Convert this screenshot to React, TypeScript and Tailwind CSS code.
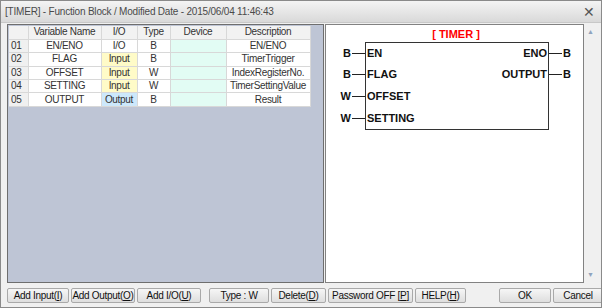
import React from "react";

const rows = [
  { no: "01", name: "EN/ENO", io: "I/O", type: "B", desc: "EN/ENO" },
  { no: "02", name: "FLAG", io: "Input", type: "B", desc: "TimerTrigger" },
  { no: "03", name: "OFFSET", io: "Input", type: "W", desc: "IndexRegisterNo." },
  { no: "04", name: "SETTING", io: "Input", type: "W", desc: "TimerSettingValue" },
  { no: "05", name: "OUTPUT", io: "Output", type: "B", desc: "Result" },
];

function ioBg(io: string) {
  if (io === "Input") return "bg-[#fffbc8]";
  if (io === "Output") return "bg-[#cde8fb]";
  return "bg-white";
}

function Btn({ children, className = "" }: { children: React.ReactNode; className?: string }) {
  return (
    <button
      className={
        "h-[15px] shrink-0 p-0 flex items-center justify-center whitespace-nowrap border border-[#a9a9a9] rounded-[2px] bg-gradient-to-b from-[#f6f6f6] to-[#dedede] text-[10px] tracking-[-0.3px] leading-none text-[#111] " +
        className
      }
    >
      {children}
    </button>
  );
}

function Diagram() {
  const left = [
    { t: "B", n: "EN", y: 27 },
    { t: "B", n: "FLAG", y: 48 },
    { t: "W", n: "OFFSET", y: 70 },
    { t: "W", n: "SETTING", y: 92 },
  ];
  const right = [
    { t: "B", n: "ENO", y: 27 },
    { t: "B", n: "OUTPUT", y: 48 },
  ];
  return (
    <svg width="258" height="120" className="block" style={{ fontFamily: '"Liberation Sans", Arial, sans-serif' }}>
      <text x="130" y="12" textAnchor="middle" fill="#ff0000" fontSize="11" fontWeight="bold">
        [ TIMER ]
      </text>
      <rect x="39.5" y="16.5" width="183" height="87" fill="none" stroke="#333" strokeWidth="1" />
      {left.map((p) => (
        <g key={p.n}>
          <text x="25" y={p.y + 4} textAnchor="end" fontSize="11" fontWeight="bold" fill="#111">
            {p.t}
          </text>
          <line x1="26" x2="39" y1={p.y + 0.5} y2={p.y + 0.5} stroke="#222" />
          <text x="41" y={p.y + 4} fontSize="11" fontWeight="bold" fill="#111">
            {p.n}
          </text>
        </g>
      ))}
      {right.map((p) => (
        <g key={p.n}>
          <text x="221" y={p.y + 4} textAnchor="end" fontSize="11" fontWeight="bold" fill="#111">
            {p.n}
          </text>
          <line x1="223" x2="236" y1={p.y + 0.5} y2={p.y + 0.5} stroke="#222" />
          <text x="237" y={p.y + 4} fontSize="11" fontWeight="bold" fill="#111">
            {p.t}
          </text>
        </g>
      ))}
    </svg>
  );
}

export default function App() {
  const cell = "border-r border-b border-[#d8d8d8] text-center";
  return (
    <div
      className="w-[602px] h-[308px] flex flex-col bg-[#f0f0f0] border border-[#8a8a8a] overflow-hidden text-[#222]"
      style={{ fontFamily: '"Liberation Sans", Arial, sans-serif' }}
    >
      {/* title bar */}
      <div className="h-[22px] shrink-0 flex items-center justify-between pl-[4px] pr-[6px] bg-gradient-to-b from-[#f4f4f4] to-[#d9d9d9] border-b border-[#c8c8c8]">
        <span className="text-[10px] tracking-[-0.2px] text-[#4a4a4a] whitespace-nowrap">
          [TIMER] - Function Block / Modified Date - 2015/06/04 11:46:43
        </span>
        <span className="text-[14px] text-[#555] leading-none">✕</span>
      </div>

      {/* body */}
      <div className="flex-1 flex pl-[6px] pr-[4px] pt-[1px] gap-[1px]">
        {/* left table panel */}
        <div className="w-[317px] h-[259px] border border-[#6e6e6e] bg-[#bec5d5] pt-[1px] pl-[1px]">
          <table className="border-collapse text-[10px] tracking-[-0.3px] leading-none text-[#333]">
            <thead>
              <tr className="h-[13.4px] bg-[#f2f2f2]">
                <th className={cell + " w-[19px] font-normal"}></th>
                <th className={cell + " w-[73px] font-normal"}>Variable Name</th>
                <th className={cell + " w-[36px] font-normal"}>I/O</th>
                <th className={cell + " w-[33px] font-normal"}>Type</th>
                <th className={cell + " w-[56px] font-normal"}>Device</th>
                <th className={cell + " w-[84px] font-normal"}>Description</th>
              </tr>
            </thead>
            <tbody>
              {rows.map((r) => (
                <tr key={r.no} className="h-[13.4px]">
                  <td className={cell + " bg-[#f0f0f0] text-left pl-[2px]"}>{r.no}</td>
                  <td className={cell + " bg-white"}>{r.name}</td>
                  <td className={cell + " " + ioBg(r.io)}>{r.io}</td>
                  <td className={cell + " bg-white"}>{r.type}</td>
                  <td className={cell + " bg-[#e2fcf4]"}></td>
                  <td className={cell + " bg-white whitespace-nowrap overflow-hidden"}>{r.desc}</td>
                </tr>
              ))}
            </tbody>
          </table>
        </div>

        {/* right diagram panel */}
        <div className="flex h-[259px]">
          <div className="w-[259px] h-full bg-white border border-[#828282] pt-[1px]">
            <Diagram />
          </div>
          <div className="w-[13px] flex flex-col justify-between items-center py-[3px] text-[7px] text-[#8fa3bd]">
            <span>▲</span>
            <span>▼</span>
          </div>
        </div>
      </div>

      {/* buttons */}
      <div className="h-[22px] shrink-0 flex items-start pl-[6px] pt-[3px] gap-[2px]">
        <Btn className="w-[62px] border-[#3c3c3c]">
          Add Input(<u>I</u>)
        </Btn>
        <Btn className="w-[64px]">
          Add Output(<u>O</u>)
        </Btn>
        <Btn className="w-[64px]">
          Add I/O(<u>U</u>)
        </Btn>
        <Btn className="w-[60px] ml-[6px]">Type : W</Btn>
        <Btn className="w-[55px]">
          Delete(<u>D</u>)
        </Btn>
        <Btn className="w-[85px]">
          Password OFF [<u>P</u>]
        </Btn>
        <Btn className="w-[51px]">
          HELP(<u>H</u>)
        </Btn>
        <Btn className="w-[52px] ml-[31px] border-[#3c7fb1] from-[#e6f1fb] to-[#b9d7f1]">OK</Btn>
        <Btn className="w-[50px]">Cancel</Btn>
      </div>
    </div>
  );
}
